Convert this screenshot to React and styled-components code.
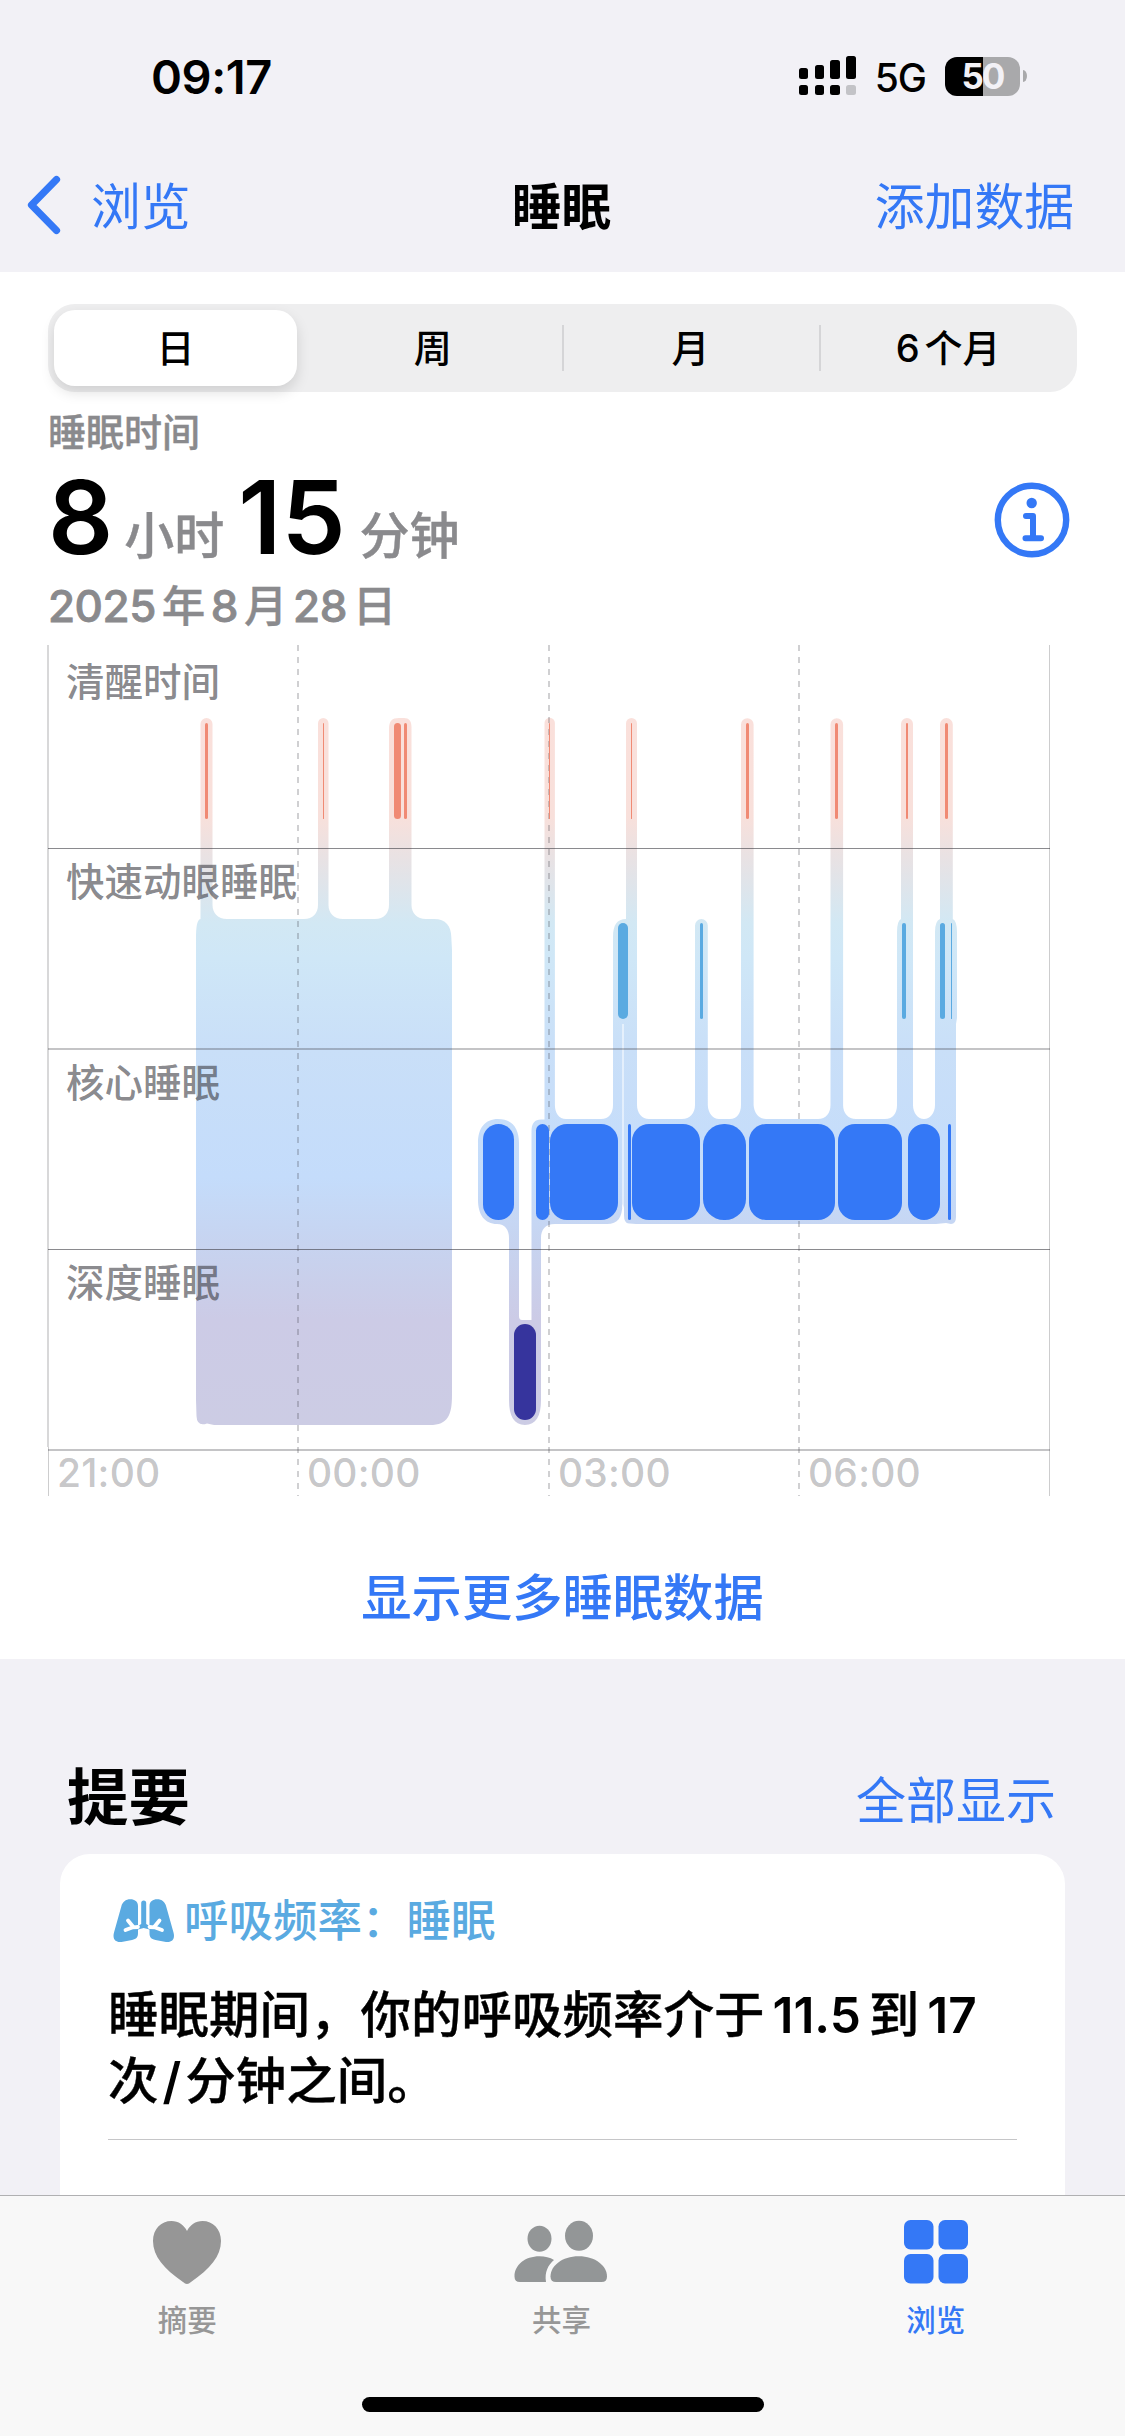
import React from "react";
import styled, { createGlobalStyle } from "styled-components";

const GlobalStyle = createGlobalStyle`
  body {
    margin: 0;
    background: #f2f1f6;
    font-family: Inter, "Noto Sans CJK SC", sans-serif;
    -webkit-font-smoothing: antialiased;
  }
`;

const BLUE = "#3478f6";
const GREY = "#8a8a8d";

const tabs = [
  { text: "日" },
  { text: "周" },
  { text: "月" },
  { count: "6", text: "个月" },
];

// [x, width] of every bar, one list per sleep stage
const stages = [
  {
    name: "清醒时间",
    labelY: 696,
    y: 723,
    color: "#f08a74",
    bars: [[205, 3], [323, 1], [394, 7], [404, 3], [549, 1], [631, 1], [746, 3], [835, 3], [906, 2], [945, 3]],
  },
  {
    name: "快速动眼睡眠",
    labelY: 896,
    y: 923,
    color: "#5aaae1",
    bars: [[618, 10], [700, 3], [902, 4], [940, 5], [951, 1]],
  },
  {
    name: "核心睡眠",
    labelY: 1097,
    y: 1124,
    color: "#3478f6",
    bars: [[483, 31], [536, 13], [550, 68], [628, 3], [632, 68], [703, 43], [749, 86], [838, 64], [908, 32], [948, 3]],
  },
  {
    name: "深度睡眠",
    labelY: 1297,
    y: 1324,
    color: "#36349d",
    bars: [[514, 22]],
  },
];

const hours = [
  { text: "21:00", x: 57 },
  { text: "00:00", x: 307 },
  { text: "03:00", x: 558 },
  { text: "06:00", x: 808 },
];

const longBand = `
  M196 940 C196 926 197 920 200.5 919 V724 a6 6 0 0 1 12 0 V905 C212.5 913 218 919 227 919
  H304 C313 919 318 913 318 905 V723.2 a5.2 5.2 0 0 1 10.5 0 V905 C328.5 913 334 919 343 919
  H375 C384 919 389 913 389 905 V729 C389 721 392 718 399 718 H404 C409 718 411.5 721 411.5 727
  V905 C411.5 913 417 919 426 919 H434 C446 919 451 926 451.3 937 L452 950 V1395
  C452 1415 448 1425 430 1425 H214 L207 1423.5 Q197 1427 196.5 1416 L196 1400 Z`;

const nightBand = `
  M478 1143 C478 1128 485 1119 498 1119 C512 1119 519 1128 519 1143 V1316 Q519 1320 522 1320 H531.5
  V1131 Q531.5 1119.5 541 1119.5 H544.5 V723 a5.2 5.2 0 0 1 10.4 0 V1105 C554.9 1113 559 1119 566 1119
  H601 C609 1119 613 1113 613 1105 V937 C613 925 617 919 626 919 V723.5 a5.5 5.5 0 0 1 11 0
  V1105 C637 1113 642 1119 649 1119 H682 C690 1119 695 1113 695 1105 V925.5 a6.4 6.4 0 0 1 12.8 0
  V1105 C708 1113 713 1119 719 1119 H730 C737 1119 741 1113 741 1105 V724.5 a6.3 6.3 0 0 1 12.6 0
  V1105 C754 1113 759 1119 766 1119 H818 C826 1119 830.5 1113 830.5 1105 V724.5 a6.3 6.3 0 0 1 12.6 0
  V1105 C843 1113 848 1119 856 1119 H885 C893 1119 897 1113 897 1105 V932 Q897 921 901 919
  V724 a6 6 0 0 1 12 0 V1105 C913 1113 918 1119 924 1119 C930 1119 935 1113 935 1105 V932
  Q935 921 940 919 V724.5 a6.4 6.4 0 0 1 12.8 0 V919 Q957 921 957 932 V1018 L956 1024 V1217
  Q956 1224 951 1224 L946 1223 L936 1224 H636 L629.5 1223.5 Q624 1224 624 1215 V1208 L622.5 1204
  C622 1218 618 1224 607 1224 H555 C545 1224 541 1230 541 1238 V1400 C541 1416 536 1425 525 1425
  C514 1425 509 1416 509 1400 V1238 C509 1230 505 1224 497 1224 C485 1224 478 1215 478 1200 Z`;

const barRadius = (width) => Math.min(width / 2, width > 60 ? 17 : 21);

const SleepChart = () => (
  <ChartSvg width="1010" height="854" viewBox="47 645 1010 854">
    <defs>
      <linearGradient id="band" gradientUnits="userSpaceOnUse" x1="0" y1="718" x2="0" y2="1425">
        <stop offset="0" stopColor="#fae0db" />
        <stop offset="0.14" stopColor="#f8e0db" />
        <stop offset="0.2" stopColor="#e8e2e4" />
        <stop offset="0.29" stopColor="#d2e8f4" />
        <stop offset="0.34" stopColor="#cfe7f7" />
        <stop offset="0.47" stopColor="#c9dff8" />
        <stop offset="0.65" stopColor="#c4dcfb" />
        <stop offset="0.75" stopColor="#c7d3ef" />
        <stop offset="0.85" stopColor="#cccbe6" />
        <stop offset="1" stopColor="#cccce4" />
      </linearGradient>
    </defs>
    <path d={longBand} fill="url(#band)" />
    <path d={nightBand} fill="url(#band)" />
    <path d="M623 1024V1208" stroke="#fff" strokeOpacity="0.5" strokeWidth="2" />

    <g fill="#3c3c43">
      <rect x="47" y="645" width="2" height="802" fillOpacity="0.2" />
      <rect x="48" y="1447" width="1" height="49" fillOpacity="0.26" />
      <rect x="1049" y="645" width="1" height="851" fillOpacity="0.26" />
    </g>
    {[298, 549, 799].map((x) => (
      <g key={x} stroke="#3c3c43" strokeOpacity="0.24" strokeWidth="2" strokeDasharray="6 6">
        <path d={`M${x} 645V1447`} />
        <path d={`M${x} 1447V1496`} />
      </g>
    ))}
    <g fill="#3c3c43">
      <rect x="48" y="848" width="1002" height="1" fillOpacity="0.6" />
      <rect x="48" y="1048" width="1002" height="2" fillOpacity="0.3" />
      <rect x="48" y="1249" width="1002" height="1" fillOpacity="0.6" />
      <rect x="48" y="1449" width="1002" height="2" fillOpacity="0.3" />
    </g>

    {stages.map((stage) => (
      <g key={stage.name}>
        {stage.bars.map(([x, width]) => (
          <rect key={x} x={x} y={stage.y} width={width} height="96" rx={barRadius(width)} fill={stage.color} />
        ))}
        <StageLabel x="66" y={stage.labelY}>{stage.name}</StageLabel>
      </g>
    ))}
    {hours.map((hour) => (
      <HourLabel key={hour.text} x={hour.x} y="1487">{hour.text}</HourLabel>
    ))}
  </ChartSvg>
);

const SignalIcon = () => (
  <svg width="58" height="40" viewBox="0 0 58 40">
    <rect x="0" y="12" width="9" height="11" rx="2.5" />
    <rect x="16" y="9" width="9" height="14" rx="2.5" />
    <rect x="31" y="4" width="10" height="19" rx="2.5" />
    <rect x="47" y="0" width="10" height="23" rx="2.5" />
    <rect x="0" y="29" width="9" height="10" rx="2.5" />
    <rect x="16" y="29" width="9" height="10" rx="2.5" />
    <rect x="31" y="29" width="10" height="10" rx="2.5" />
    <rect x="47" y="29" width="10" height="10" rx="2.5" fill="#c3c3c7" />
  </svg>
);

const InfoIcon = () => (
  <svg width="76" height="76" viewBox="0 0 76 76" fill="none" stroke={BLUE}>
    <circle cx="38" cy="38" r="34.2" strokeWidth="6.4" />
    <circle cx="37.7" cy="21" r="5.2" fill={BLUE} stroke="none" />
    <path d="M32 34H39V56M31.5 56.3H47" strokeWidth="6" strokeLinecap="round" strokeLinejoin="round" />
  </svg>
);

const LungsIcon = () => (
  <svg width="62" height="44" viewBox="0 0 62 44">
    <path
      d="M25 7C25 2.5 21.5 0.3 17.5 0.3C12.5 0.3 9.5 3 8.3 7.5L1 33.5C-0.8 40 2.5 43.8 8.5 43L19 41C23.5 40 25 38 25 34V30.5L30.7 29L36.5 30.5V34C36.5 38 38 40 42.5 41L53 43C59 43.8 62.3 40 60.5 33.5L53.2 7.5C52 3 49 0.3 44 0.3C40 0.3 36.5 2.5 36.5 7V27L33.2 25V4Q33.2 1.5 30.7 1.5Q28.2 1.5 28.2 4V25L25 27Z"
      fill="#5aaae1"
    />
    <g fill="none" stroke="#fff" strokeWidth="3.8" strokeLinecap="round">
      <path d="M25 28L20.5 28.3L15 21.5M20 28.3L12.5 31" />
      <path d="M36.5 28L41 28.3L46.5 21.5M41.5 28.3L49 31" />
    </g>
  </svg>
);

const HeartIcon = () => (
  <svg width="70" height="64" viewBox="0 0 70 64">
    <path
      d="M35 64C33.5 64 32.5 63 31 62C12 49 1 36 1 21C1 9 9 1 19.5 1C26.5 1 32 5 35 11C38 5 43.5 1 50.5 1C61 1 69 9 69 21C69 36 58 49 39 62C37.5 63 36.5 64 35 64Z"
      fill="#969696"
    />
  </svg>
);

const PeopleIcon = () => (
  <svg width="94" height="64" viewBox="0 0 94 64" fill="#939697">
    <ellipse cx="25.5" cy="18.8" rx="12" ry="13" />
    <ellipse cx="65" cy="15.8" rx="14" ry="15" />
    <path d="M6 62Q0.5 62 0.5 56.5C0.5 45 11 36.3 25.5 36.3C31 36.3 36 37.5 40 40C34 45 30.5 52 32 62Z" />
    <path d="M42 62Q36.5 62 36.5 56.5C36.5 46 48 36.3 64.7 36.3C81.5 36.3 93 46 93 56.5Q93 62 87.5 62Z" />
  </svg>
);

const GridIcon = () => (
  <svg width="64" height="64" viewBox="0 0 64 64" fill={BLUE}>
    <rect x="0" y="0" width="29.5" height="29.5" rx="6.5" />
    <rect x="34.5" y="0" width="29.5" height="29.5" rx="6.5" />
    <rect x="0" y="34" width="29.5" height="29.5" rx="6.5" />
    <rect x="34.5" y="34" width="29.5" height="29.5" rx="6.5" />
  </svg>
);

const App = () => {
  return (
    <Screen>
      <GlobalStyle />
      <StatusBar>
        <Clock>09:17</Clock>
        <StatusIcons>
          <SignalIcon />
          <Network>5G</Network>
          <Battery>
            <BatteryBody>50</BatteryBody>
            <BatteryTip />
          </Battery>
        </StatusIcons>
      </StatusBar>
      <NavBar>
        <BackLink>
          <svg width="34" height="60" viewBox="0 0 34 60">
            <path d="M29.5 4.5L4.5 30L29.5 55.5" fill="none" stroke={BLUE} strokeWidth="7.2" strokeLinecap="round" strokeLinejoin="round" />
          </svg>
          浏览
        </BackLink>
        <NavTitle>睡眠</NavTitle>
        <NavAction>添加数据</NavAction>
      </NavBar>

      <SleepPanel>
        <Segments>
          {tabs.map((tab, i) => (
            <Segment key={tab.text} $active={i === 0} $divider={i > 1}>
              {tab.count && <Count>{tab.count}</Count>}
              {tab.text}
            </Segment>
          ))}
        </Segments>
        <Overview>
          <div>
            <Caption>睡眠时间</Caption>
            <Duration>
              <Amount>8</Amount>
              <Unit>小时</Unit>
              <Amount>15</Amount>
              <Unit>分钟</Unit>
            </Duration>
            <DateLine>
              2025<DatePart>年</DatePart>8<DatePart>月</DatePart>28<DatePart>日</DatePart>
            </DateLine>
          </div>
          <InfoIcon />
        </Overview>
        <SleepChart />
        <MoreButton>显示更多睡眠数据</MoreButton>
      </SleepPanel>

      <Highlights>
        <HighlightsHeader>
          <SectionTitle>提要</SectionTitle>
          <ShowAll>全部显示</ShowAll>
        </HighlightsHeader>
        <Card>
          <CardHeader>
            <LungsIcon />
            呼吸频率：睡眠
          </CardHeader>
          <CardText>
            睡眠期间，你的呼吸频率介于<Num>11.5</Num>到<Num>17</Num>
            <br />
            次<Num $tight>/</Num>分钟之间。
          </CardText>
        </Card>
      </Highlights>

      <TabBar>
        <Tabs>
          <Tab>
            <HeartIcon />
            摘要
          </Tab>
          <Tab>
            <PeopleIcon />
            共享
          </Tab>
          <Tab $active>
            <GridIcon />
            浏览
          </Tab>
        </Tabs>
        <HomeIndicator />
      </TabBar>
    </Screen>
  );
};

const Screen = styled.div`
  width: 1125px;
  height: 2436px;
  display: flex;
  flex-direction: column;
  overflow: hidden;
  background: #f2f1f6;
  color: #000;
`;

const StatusBar = styled.div`
  height: 152px;
  flex: none;
  box-sizing: border-box;
  padding: 0 98px 0 151px;
  display: flex;
  justify-content: space-between;
  align-items: center;
`;

const Clock = styled.div`
  font-size: 47px;
  font-weight: 600;
  line-height: 60px;
  letter-spacing: -0.4px;
  padding-top: 2px;
`;

const StatusIcons = styled.div`
  display: flex;
  align-items: center;
`;

const Network = styled.div`
  font-size: 39px;
  font-weight: 500;
  line-height: 40px;
  letter-spacing: -1px;
  padding-top: 4px;
  margin: 0 19px 0 18px;
`;

const Battery = styled.div`
  display: flex;
  align-items: center;
  gap: 3px;
`;

const BatteryBody = styled.div`
  width: 75px;
  height: 39px;
  border-radius: 12px;
  background: linear-gradient(90deg, #000 50.5%, #a9a9ab 50.5%);
  color: #f2f1f6;
  font-size: 35px;
  font-weight: 700;
  line-height: 39px;
  text-align: center;
  letter-spacing: -2px;
`;

const BatteryTip = styled.div`
  width: 4px;
  height: 12px;
  border-radius: 0 4px 4px 0 / 0 6px 6px 0;
  background: #a9a9ab;
`;

const NavBar = styled.div`
  height: 120px;
  flex: none;
  box-sizing: border-box;
  padding: 0 51px 0 27px;
  display: grid;
  grid-template-columns: 1fr auto 1fr;
  font-size: 49.8px;
  line-height: 110px;
  color: ${BLUE};
`;

const BackLink = styled.div`
  height: 110px;
  display: flex;
  align-items: center;
  gap: 30px;

  svg {
    margin-bottom: 4px;
  }
`;

const NavTitle = styled.div`
  color: #000;
  font-weight: 700;
  padding-left: 22px;
`;

const NavAction = styled.div`
  text-align: right;
`;

const SleepPanel = styled.section`
  height: 1387px;
  flex: none;
  box-sizing: border-box;
  padding: 32px 48px 0;
  background: #fff;
`;

const Segments = styled.div`
  height: 88px;
  box-sizing: border-box;
  padding: 6px 0 6px 6px;
  display: grid;
  grid-template-columns: 250px 1fr 1fr 1fr;
  border-radius: 27px;
  background: #eeeeef;
`;

const Segment = styled.div`
  position: relative;
  margin-right: ${(p) => (p.$active ? "7px" : "0")};
  font-size: 38px;
  font-weight: 500;
  line-height: 76px;
  text-align: center;
  border-radius: 21px;
  background: ${(p) => (p.$active ? "#fff" : "none")};
  box-shadow: ${(p) => (p.$active ? "0 6px 14px rgba(0, 0, 0, 0.13)" : "none")};

  &::before {
    content: "";
    display: ${(p) => (p.$divider ? "block" : "none")};
    position: absolute;
    left: 0;
    top: 15px;
    width: 2px;
    height: 46px;
    background: #d5d5d7;
  }
`;

const Count = styled.span`
  margin-right: 5px;
`;

const Overview = styled.div`
  height: 253px;
  display: flex;
  justify-content: space-between;
  padding-right: 7px;

  svg {
    margin-top: 90px;
  }
`;

const Caption = styled.div`
  padding: 18px 0 0 0;
  font-size: 38px;
  font-weight: 500;
  line-height: 44px;
  color: ${GREY};
  -webkit-text-stroke: 0.4px ${GREY};
`;

const Duration = styled.div`
  height: 110px;
  padding-top: 8px;
  display: flex;
  align-items: baseline;
  line-height: 110px;
`;

const Amount = styled.span`
  font-size: 102px;
  font-weight: 600;
`;

const Unit = styled.span`
  font-size: 50px;
  font-weight: 500;
  color: ${GREY};
  margin: 0 14px 0 11px;
  -webkit-text-stroke: 0.4px ${GREY};

  &:last-child {
    margin-left: 14px;
  }
`;

const DateLine = styled.div`
  font-size: 44px;
  font-weight: 500;
  line-height: 68px;
  letter-spacing: -0.5px;
  color: ${GREY};
  -webkit-text-stroke: 0.8px ${GREY};
`;

const DatePart = styled.span`
  margin: 0 6px;
  font-size: 43.5px;
  -webkit-text-stroke: 0.4px ${GREY};
`;

const ChartSvg = styled.svg`
  display: block;
  margin-left: -1px;
`;

const StageLabel = styled.text`
  font-size: 38.5px;
  font-weight: 500;
  fill: rgba(60, 60, 67, 0.62);
`;

const HourLabel = styled.text`
  font-size: 39px;
  font-weight: 500;
  letter-spacing: 0.2px;
  fill: rgba(60, 60, 67, 0.3);
`;

const MoreButton = styled.div`
  padding-top: 61px;
  font-size: 50.3px;
  font-weight: 500;
  line-height: 76px;
  text-align: center;
  color: ${BLUE};
`;

const Highlights = styled.section`
  flex: 1;
  min-height: 0;
  overflow: hidden;
  padding: 0 60px;
  display: flex;
  flex-direction: column;
`;

const HighlightsHeader = styled.div`
  height: 195px;
  flex: none;
  box-sizing: border-box;
  padding: 0 9px 0 7px;
  display: flex;
  justify-content: space-between;
  align-items: flex-end;
`;

const SectionTitle = styled.h2`
  margin: 0;
  font-size: 61.5px;
  font-weight: 700;
  line-height: 112px;
`;

const ShowAll = styled.div`
  font-size: 50px;
  line-height: 106px;
  color: ${BLUE};
`;

const Card = styled.div`
  flex: 1;
  border-radius: 30px 30px 0 0;
  background: #fff;
  padding: 0 48px;
`;

const CardHeader = styled.div`
  padding: 34px 0 0 5px;
  display: flex;
  align-items: center;
  gap: 9px;
  font-size: 44.5px;
  font-weight: 500;
  line-height: 66px;
  color: #5aaae1;
`;

const CardText = styled.div`
  height: 186px;
  box-sizing: border-box;
  padding-top: 28px;
  font-size: 50.5px;
  font-weight: 500;
  line-height: 66px;
  white-space: nowrap;
  border-bottom: 1px solid #c6c6c8;
  -webkit-text-stroke: 0.4px #000;
`;

const Num = styled.span`
  margin: 0 ${(p) => (p.$tight ? "4px" : "8px")};
  font-size: 49.5px;
  font-weight: 600;
  -webkit-text-stroke: 0;
`;

const TabBar = styled.nav`
  height: 241px;
  flex: none;
  box-sizing: border-box;
  border-top: 1px solid #b0b0b2;
  background: #f8f8f8;
`;

const Tabs = styled.div`
  display: grid;
  grid-template-columns: repeat(3, 1fr);
  height: 201px;
  padding-right: 2px;
`;

const Tab = styled.div`
  padding-top: 24px;
  display: flex;
  flex-direction: column;
  align-items: center;
  gap: 14px;
  font-size: 29.5px;
  font-weight: 500;
  line-height: 44px;
  color: ${(p) => (p.$active ? BLUE : "#979797")};
`;

const HomeIndicator = styled.div`
  width: 402px;
  height: 15px;
  margin: 0 auto;
  border-radius: 8px;
  background: #000;
`;

export default App;
